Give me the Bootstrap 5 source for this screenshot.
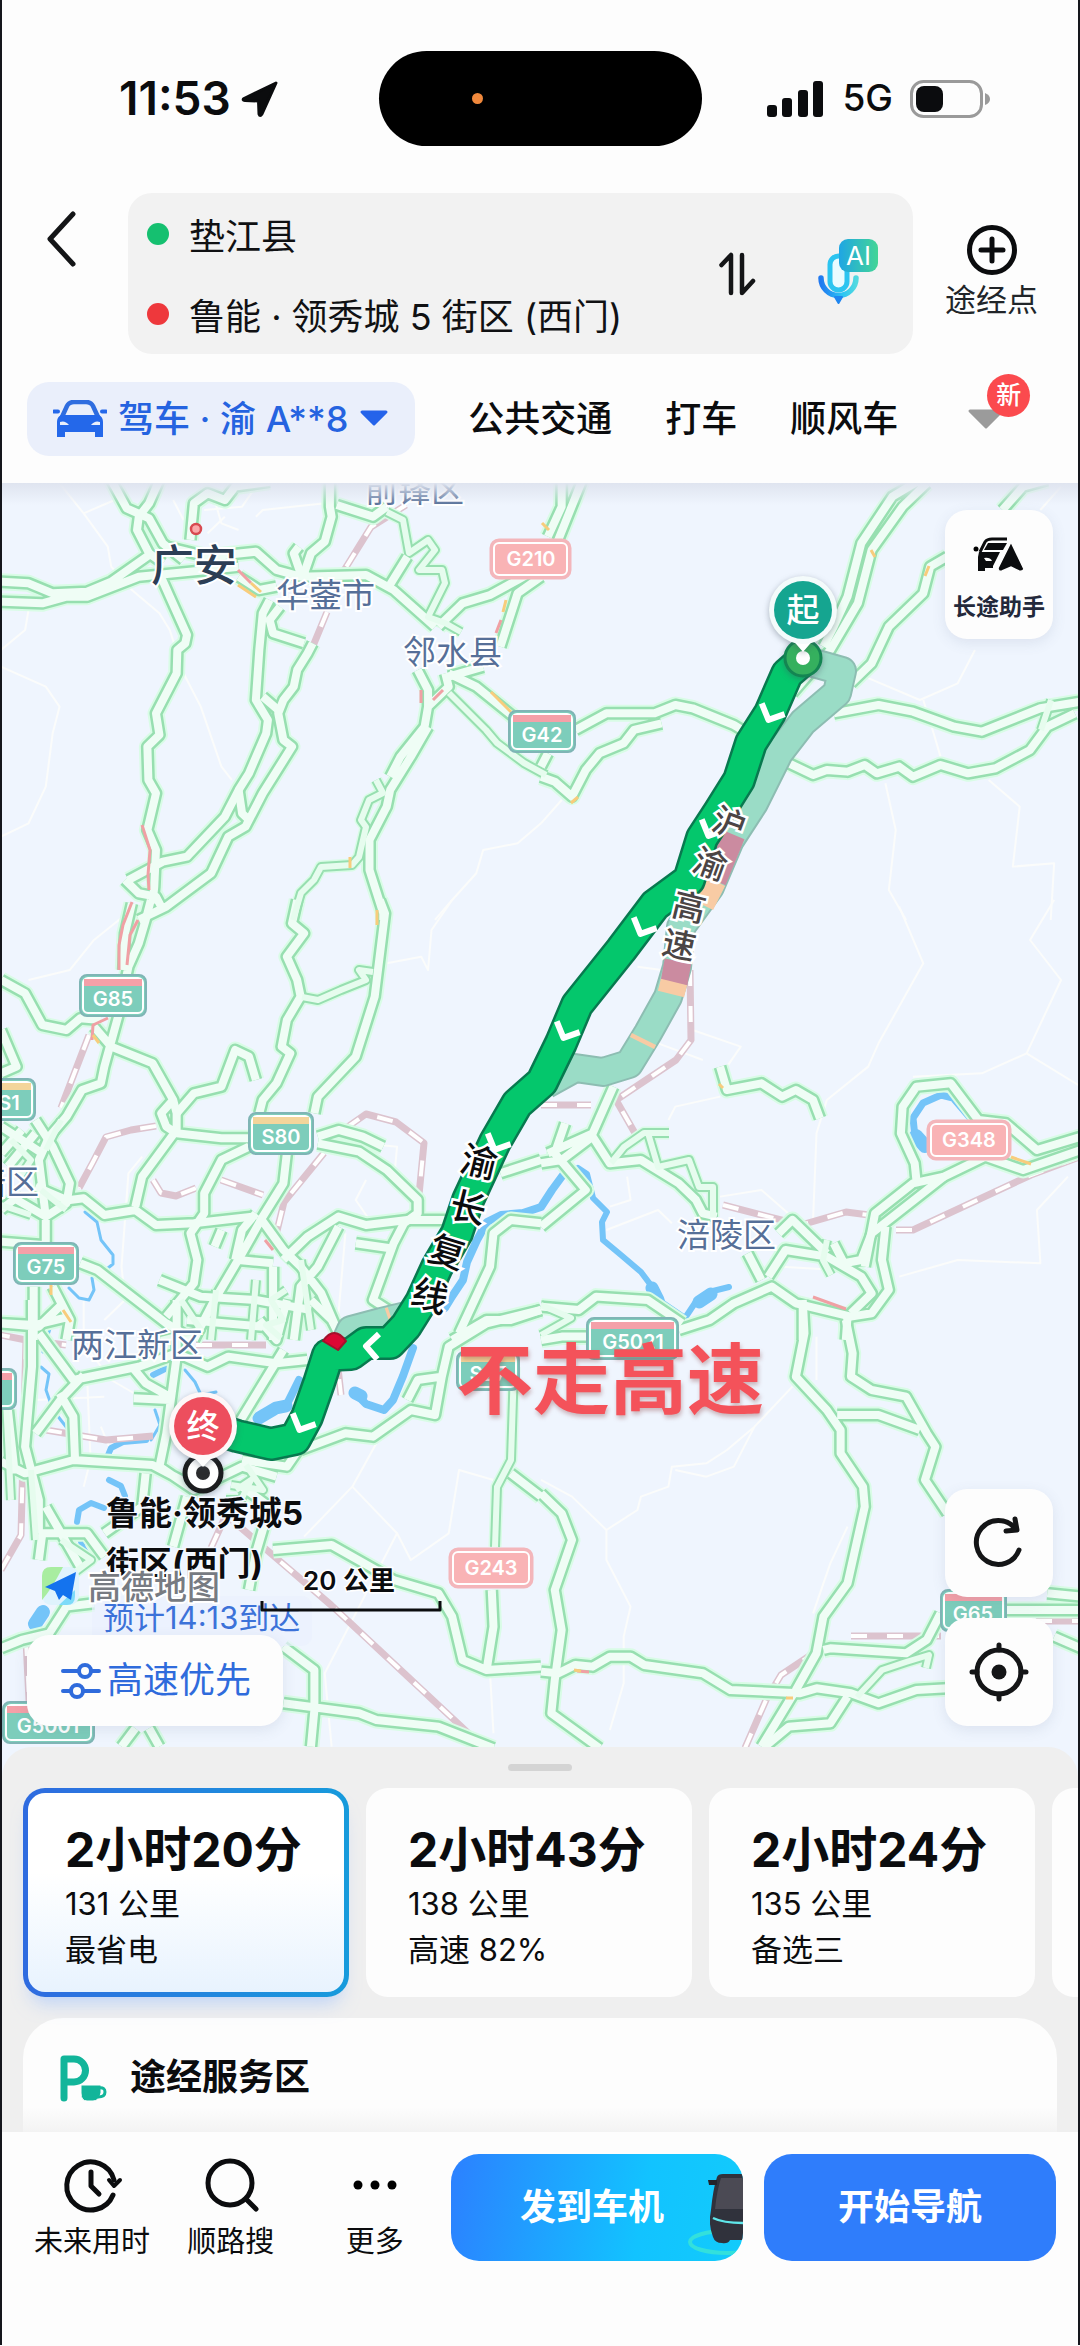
<!DOCTYPE html>
<html lang="zh-CN">
<head>
<meta charset="utf-8">
<meta name="viewport" content="width=device-width, initial-scale=1">
<title>路线规划</title>
<link href="https://cdn.jsdelivr.net/npm/bootstrap@5.3.0/dist/css/bootstrap.min.css" rel="stylesheet">
<style>
body{font-family:Inter,"Noto Sans CJK SC",sans-serif;background:#fdfdfd;color:#0b0c0e;line-height:1.25;overflow-x:hidden}
svg{display:block}
button{color:inherit}
.screen{border-left:2px solid #15161c;border-right:2px solid #15161c;overflow:hidden}
/* status bar */
.status{height:193px;padding:51px 88px 0 117px}
.status-side{height:95px;gap:17px}
.status-left{width:260px;gap:10px}
.clock{font-size:46px;font-weight:600}
.net{font-size:37px;font-weight:500}
.island{width:323px;height:95px;border-radius:48px;background:#000;padding-left:93px}
.island i{width:11px;height:11px;border-radius:50%;background:#f0883c}
/* search */
.search{padding:0 40px 0 44px}
.ends{background:#f2f2f2;border-radius:24px;height:161px;padding:0 32px 0 19px;margin-right:32px}
.pin-dot{width:22px;height:22px;border-radius:50%;flex:none}
.end-field{border:0;background:none;font-size:36px;height:80px;width:100%;padding:0;outline:0;color:#101113}
.swap{margin-right:58px}
.t31{font-size:31px;line-height:40px;white-space:nowrap}
/* tabs */
.modes{height:129px;padding:28px 0 0 25px;gap:53px}
.mode{font-size:36px;line-height:44px;font-weight:500;border:0;background:none;padding:0;height:74px;white-space:nowrap}
.mode-on{background:#eaeffb;color:#2563e0;border-radius:22px;padding:0 26px;gap:11px}
.newtag{width:43px;height:43px;border-radius:50%;background:#fb4a4e;color:#fff;font-size:25px;line-height:43px;left:20px;top:-34px;text-align:center}
/* map */
.map svg.chart{width:100%;height:auto;background:#eff5fe}
.map::before{content:"";position:absolute;left:0;right:0;top:0;height:22px;background:linear-gradient(#dfe4ef,#dfe4ef00)}
.chart path,.chart use{fill:none;stroke-linejoin:round}
#roads path,#rails path,#lanes path,#hot path,#river path{vector-effect:non-scaling-stroke}
#river path{stroke-linecap:round}
.place{font-size:33px;fill:#566f98;stroke:#fff;stroke-width:4px;paint-order:stroke}
.place .city{font-size:43px;fill:#2c3e55;font-weight:500}
.way{font-size:33px;font-weight:500;stroke:#fff;stroke-width:5px;paint-order:stroke;text-anchor:middle}
.way-main{font-size:36px}
.shield{font-size:20px;font-weight:600;fill:#fff;text-anchor:middle}
.dest{font-size:33px;font-weight:700;fill:#0b0c0e;stroke:#f4f9ff;stroke-width:3px;paint-order:stroke}
.lift{filter:drop-shadow(0 2px 3px #40506066)}
.fab{background:#fdfdfd;border:0;border-radius:22px;width:108px;box-shadow:0 4px 14px #5060801f}
.fab-top{right:25px;top:27px;height:129px;font-size:23px;line-height:30px;font-weight:600;color:#23293b}
.fab-stack{right:25px;bottom:51px;gap:21px}
.fab-stack .fab{height:108px}
.prefer{left:25px;bottom:51px;height:91px;width:256px;font-size:36px;color:#2f6bdc}
/* sheet */
.sheet{background:#efefef;border-radius:30px 30px 0 0;margin-top:-30px;height:385px;overflow:hidden}
.grip{width:64px;height:7px;border-radius:4px;background:#d4d4d4;margin:17px auto}
.plans{gap:17px;padding-left:21px}
.plan{flex:0 0 326px;height:209px;border-radius:22px;background:#fdfdfd;border:0;padding:6px 0 0 42px;text-align:left}
.plan b{display:block;font-size:48px;line-height:62px;font-weight:700;white-space:nowrap}
.plan span{display:block;font-size:31px;line-height:46px}
.plan-on{border:5px solid transparent;padding:6px 0 0 37px;background:linear-gradient(#fff 40%,#e8f3fe) padding-box,linear-gradient(90deg,#2f6be0,#179bdc) border-box;box-shadow:0 14px 18px -8px #8db8ff80}
.service{background:linear-gradient(#fdfdfd 75%,#f1f1f1);border-radius:40px 40px 0 0;margin:21px 21px 0;height:119px;padding:0 34px;gap:21px;font-size:36px;font-weight:700}
/* action bar */
.actions{height:213px;padding:22px 22px 0 32px;background:#fdfdfd}
.tool{border:0;background:none;padding:0;font-size:29px;line-height:36px}
.tool svg{height:62px}
.keys{gap:21px}
.go{height:107px;border:0;border-radius:28px;color:#fff;font-size:36px;font-weight:600;width:292px;background:#2f7dfb}
.go-car{background:linear-gradient(100deg,#2c80ff,#12c3ff 65%,#12cbfb);overflow:hidden}
.go-car svg{right:0;top:0}
</style>
</head>
<body>
<div class="screen">
<header>
  <div class="status d-flex">
    <div class="status-side status-left d-flex align-items-center">
      <span class="clock">11:53</span>
      <svg width="38" height="38" viewBox="0 0 38 38" aria-hidden="true"><path d="M35 3 3 18.500Q1 20 4 20.500L17.500 21 18 34Q19 37 21 34Z" fill="#0b0c0e" stroke="#0b0c0e" stroke-width="3" stroke-linejoin="round"/></svg>
    </div>
    <div class="island d-flex align-items-center"><i></i></div>
    <div class="status-side flex-grow-1 d-flex align-items-center justify-content-end">
      <svg width="58" height="36" viewBox="0 0 58 36" aria-hidden="true"><g fill="#0b0c0e"><rect y="24" width="10" height="12" rx="3"/><rect x="15" y="17" width="10" height="19" rx="3"/><rect x="31" y="9" width="10" height="27" rx="3"/><rect x="46" width="10" height="36" rx="3"/></g></svg>
      <span class="net">5G</span>
      <svg width="80" height="38" viewBox="0 0 80 38" aria-hidden="true"><rect x="1.500" y="1.500" width="70" height="35" rx="12" fill="none" stroke="#9a9a9a" stroke-width="3"/><rect x="6" y="6" width="27" height="26" rx="8" fill="#0b0c0e"/><path d="M75 13q5 2 5 6t-5 6z" fill="#9a9a9a"/></svg>
    </div>
  </div>

  <div class="search d-flex align-items-center">
    <button class="btn p-0 border-0 align-self-start mt-3" aria-label="返回"><svg width="34" height="60" viewBox="0 0 34 60"><path d="M27 5 4 30 27 55" fill="none" stroke="#141517" stroke-width="5" stroke-linecap="round" stroke-linejoin="round"/></svg></button>
    <div class="ends d-flex align-items-center flex-grow-1 ms-5">
      <div class="flex-grow-1">
        <label class="d-flex align-items-center gap-3"><span class="pin-dot" style="background:#15c070"></span><input class="end-field ms-1" type="text" aria-label="起点" value="垫江县"></label>
        <label class="d-flex align-items-center gap-3"><span class="pin-dot" style="background:#ee383c"></span><input class="end-field ms-1" type="text" aria-label="终点" value="鲁能 · 领秀城 5 街区 (西门)"></label>
      </div>
      <button class="swap btn p-0 border-0" aria-label="交换"><svg width="38" height="44" viewBox="0 0 38 44"><path d="M2.500 13 12 3V41M23 3V41L34 29" fill="none" stroke="#141517" stroke-width="4.500" stroke-linecap="round" stroke-linejoin="round"/></svg></button>
      <button class="btn p-0 border-0" aria-label="AI 语音"><svg width="66" height="78" viewBox="0 0 66 78">
        <defs><linearGradient id="mic" x1="0" x2="1"><stop stop-color="#2079f0"/><stop offset=".6" stop-color="#2cc4f4"/><stop offset="1" stop-color="#52d9e0"/></linearGradient><linearGradient id="aib" x1="0" x2="1"><stop stop-color="#1fa6e4"/><stop offset="1" stop-color="#43d596"/></linearGradient></defs>
        <rect x="15" y="21" width="17" height="34" rx="8.500" fill="#e9fbff" stroke="#2cc4f0" stroke-width="5"/>
        <path d="M6 43a17.500 17.500 0 0 0 35 0" fill="none" stroke="url(#mic)" stroke-width="5.500" stroke-linecap="round"/><path d="M20 62h7l-3.500 6z" fill="#1f86f0" stroke="#1f86f0" stroke-width="2" stroke-linejoin="round"/>
        <rect x="24" y="4" width="39" height="33" rx="9" fill="url(#aib)"/><text x="43.500" y="30" font-size="26" fill="#fff" text-anchor="middle">AI</text></svg></button>
    </div>
    <button class="btn p-0 border-0 t31 d-flex flex-column align-items-center gap-1 pb-1"><svg width="52" height="52" viewBox="0 0 52 52"><circle cx="26" cy="26" r="22.500" fill="none" stroke="#0b0c0e" stroke-width="5"/><path d="M26 15V37M15 26H37" stroke="#0b0c0e" stroke-width="5" stroke-linecap="round"/></svg>途经点</button>
  </div>

  <nav class="modes d-flex align-items-start">
    <button class="mode mode-on d-flex align-items-center">
      <svg width="54" height="38" viewBox="0 0 54 38"><path d="M9 17 14 6Q16 2 21 2H33Q38 2 40 6L45 17" fill="none" stroke="#2f6ddf" stroke-width="4.500"/><path d="M8 15H46Q50 17 50 22V37H42V32H12V37H4V22Q4 17 8 15Z" fill="#2468ea"/><path d="M1 11.500H5M49 11.500H53" stroke="#2468ea" stroke-width="4" stroke-linecap="round"/><path d="M7 22q5-2 9 3H7zM47 22q-5-2-9 3h9z" fill="#eaeffb"/></svg>
      驾车 · 渝 A**8
      <svg width="30" height="18" viewBox="0 0 30 18"><path d="M3 2H27L15 14Z" fill="#2563ea" stroke="#2563ea" stroke-width="3" stroke-linejoin="round"/></svg>
    </button>
    <button class="mode">公共交通</button><button class="mode">打车</button><button class="mode">顺风车</button>
    <button class="mode d-flex align-items-center ms-3" aria-label="更多方式"><span class="position-relative"><svg width="38" height="22" viewBox="0 0 38 22"><path d="M3 3H35L19 19Z" fill="#9b9b9b" stroke="#9b9b9b" stroke-width="3" stroke-linejoin="round"/></svg><span class="newtag position-absolute">新</span></span></button>
  </nav>
</header>

<main class="map position-relative">
<svg class="chart" viewBox="1 483 1076 1294" role="img" aria-label="路线地图">
<defs>
<g id="lanes">
 <g transform="translate(0 480) scale(.3444 .3333)"><path d="M170 10 240 100 310 200 320 260 380 330 460 400 490 450 530 580 580 680 640 860 670 900M240 100 330 60M740 110 760 90 940 70M500 60 530 120M620 60 640 130 690 150M590 90 700 80 740 20M600 160 650 110M80 390 70 450 0 510M0 560 130 620 170 680 150 760 130 920 80 1030 0 1070M1568 1030 1500 1090 1400 1110 1380 1180 1310 1260 1260 1320"/></g>
 <g transform="translate(540 480) scale(.3444 .3333)"><path d="M0 1030 60 960M940 590 1100 660 1210 610 1260 510M1110 660 1140 760 1160 830M1000 910 1030 1050 1010 1230 1060 1320M1300 900 1390 980 1370 1160 1490 1150 1480 1320M1510 20 1450 90"/></g>
 <g transform="translate(0 900) scale(.3444 .3333)"><path d="M390 20 270 120 200 210 80 240M1120 190 1220 170 1240 210 1250 90 1310 0M410 770 370 820 350 1100 360 1200 300 1260M1050 730 1150 740 1140 850M1060 840 1030 900 1070 960M1000 1000 980 1240"/></g>
 <g transform="translate(540 900) scale(.3444 .3333)"><path d="M1040 20 1110 190 980 430 950 500 830 600 800 700 790 960M440 390 580 440 540 500M370 660 390 620 520 590M280 200 350 210M340 430 470 480M1490 0 1420 120 1510 240 1410 460 1280 520 1080 530M1410 460 1568 560M520 890 640 870 740 960M1530 830 1440 930 1450 1090 1210 1080 1040 1130M190 990 340 930 380 970M250 830 260 900 200 920M700 1100 860 1110"/></g>
 <g transform="translate(0 1300) scale(.3444 .3333)"><path d="M240 0 240 130 320 240 420 300M250 230 260 480 240 560M1090 430 1020 560 1150 700 1190 780 1300 700 1330 510 1430 540M1020 560 880 710M1150 700 1010 980 940 1120 960 1340M1420 1120 1430 1300M100 300 300 290M290 380 330 480"/></g>
 <g transform="translate(540 1300) scale(.3444 .3333)"><path d="M730 260 620 380 540 450 480 490 380 500 370 560 290 590 280 630 190 690 90 590 0 540M620 380 560 500 480 530 390 510M190 690 190 780 260 920 240 1010 240 1150 200 1290M890 680 840 790 790 940M800 240 800 110"/></g>
</g>
<g id="river">
 <path stroke-width="8" d="M562 1175 551 1190 540 1207 522 1213 500 1215 486 1222 476 1240 466 1262 462 1280 452 1295 444 1308M412 1348 402 1376 392 1400 383 1410 365 1404 354 1393"/>
 <path stroke-width="6" d="M577 1168 586 1174 592 1198 606 1212 601 1222 602 1240 620 1255 640 1272 652 1288 662 1303 684 1318 694 1303 708 1292 728 1287"/>
 <path stroke-width="13" d="M651 1288 657 1300M698 1302 710 1294M354 1393 360 1396M258 1418 275 1408 285 1406"/>
 <path stroke-width="8" d="M285 1406 298 1380"/>
 <path stroke-width="7" d="M927 1149 914 1137 912 1118 922 1103 940 1095 952 1098 970 1119"/>
 <path stroke-width="14" d="M915 1136 924 1146"/>
 <path stroke-width="3" d="M84 1212 96 1222 100 1240 112 1255 112 1264 107 1268M68 1288 78 1298 88 1300 93 1290 91 1278M184 1370 194 1382 200 1395 215 1392M40 1367 48 1374 45 1390 52 1410 66 1428M150 1440 159 1425 154 1410M50 1325 42 1352"/>
 <path stroke-width="6" d="M105 1460 110 1448 122 1442 145 1440M108 1480 120 1486 124 1496 118 1504M76 1522 78 1510 90 1503 103 1508M90 1560 82 1548 78 1535M168 1367 152 1375"/>
 <path stroke-width="14" d="M34 1624 42 1612"/>
</g>
<g id="rails">
 <path d="M405 505 370 527 342 572M326 612 312 646M88 1035 60 1108M155 1126 130 1130 105 1137 92 1162 78 1188M345 1128 365 1114 395 1122 423 1143 418 1195M152 1180 160 1193 175 1196 195 1188M220 1180 262 1195M323 1153 283 1202 275 1235M540 1105 590 1105M689 970 690 1040 675 1060 615 1100 635 1135M722 1205 800 1225 845 1212 868 1215M895 1230 912 1230 1030 1175 1076 1158M0 1570 20 1535 25 1340 0 1335M25 1340 65 1345M45 1430 105 1440 152 1436M210 1548 225 1515 330 1605 480 1745M25 1640 30 1740M744 1748 765 1700 780 1675 810 1655M850 1636 940 1636M1035 1621 1078 1621M340 1395 335 1350M195 1345 265 1345"/>
</g>
<g id="roads">
 <g transform="translate(0 480) scale(.3444 .3333)">
  <path d="M320 0 365 85 430 115 470 190 530 240M460 0 430 70 400 110 395 150 430 220 470 250M0 305 80 310 150 340 250 335 320 305 430 225M0 365 120 370 190 350 250 350 400 290 600 270 690 260M460 280 490 350 540 465 535 490 512 510 510 580 450 700 460 765 425 800 428 900 450 940 425 1050 450 1110 445 1220 440 1270"/>
  <path d="M480 200 600 230 740 215 800 270 870 290 1060 285 1140 330 1260 440M955 0V80L960 110 940 185 900 220 880 280M975 75 1080 110 1120 80M690 290 750 330 800 320M780 360 760 400 750 510 740 660 775 720 770 760 720 880 690 930 650 1010 540 1130 470 1145 370 1200M810 380 780 420 790 460 880 490"/>
  <path d="M905 490 890 520 860 570 850 620 820 660 805 700 820 780 845 800 760 940 710 1040 660 1070 610 1180 480 1280 400 1320M690 930 700 1000 720 1020M360 1200 400 1240 450 1250 470 1290M550 180 560 70 600 40 650 60 680 20 780 5M1120 330 1180 230M1270 440 1340 370 1420 345 1500 300 1568 260M1450 500 1500 340 1568 290M1300 590 1400 560"/>
  <path d="M1210 570 1240 630 1240 680 1230 740 1160 830 1130 890M1240 680 1300 620 1290 580M1300 580 1380 620 1500 720M1240 740 1190 830 1130 930 1120 980 1070 1080 1070 1170 1110 1300V1320M760 650 805 690M865 200 850 220 870 280"/>
 </g>
 <g transform="translate(540 480) scale(.3444 .3333)">
  <path d="M60 0 60 80 20 170M120 0 50 180M1100 0 1020 50 930 190 890 350 850 440 820 500M1120 10 1050 80 960 210 920 370 840 510 730 640M1470 0 1400 20 1340 90M1180 230 1130 260 1110 340 1010 440 960 550 900 610"/>
  <path d="M100 750 190 700 330 700 390 675 440 685 560 735 600 760M850 700 980 675 1080 695 1200 740 1280 755 1450 685 1568 665M0 890 40 905 90 950 130 870 170 820 240 790 270 750 350 730M0 860 20 820"/>
  <path d="M720 850 790 885 830 870 890 875 940 855 975 880 1040 860 1080 890 1160 855 1240 880 1320 865 1420 810 1470 740 1550 700"/>
 </g>
 <g transform="translate(0 900) scale(.3444 .3333)">
  <path d="M0 240 70 280 120 375 190 390 230 355 290 360M435 0 420 60 400 130 370 200 340 350 300 500 290 550 235 570 190 650 140 710 110 780 130 950M380 10 360 100 355 210M270 380 320 440 440 490 500 600 510 640 510 690 410 830 390 920M500 600 465 640 480 680 510 700 640 715 720 715"/>
  <path d="M860 0 845 70 880 100 830 170 860 240 870 290 830 360 815 440 840 460 800 550 760 600 750 640M1100 0 1115 40 1085 290 1030 470 920 590 910 640M510 640 560 580 640 560 680 450 720 470 740 540M920 710 980 690 1050 710 1110 740M920 730 1040 755 1120 810 1210 900 1210 940 1170 970 1140 1030 1080 1200 1140 1240"/>
  <path d="M200 900 240 895 300 945 390 930 450 975 560 970 730 950M0 1025 120 1035M130 960V1050M30 890 130 950 190 910 200 850 150 740 100 660M0 390 45 500 0 520M0 680 60 720 120 760M0 760 60 690M20 800 100 700M100 860 190 900M0 930 60 880"/>
  <path d="M720 740 640 780 590 880 590 940 550 1000 570 1080 560 1150 480 1250M830 760 820 850 760 950 700 1060 620 1200 560 1320M750 950 820 1050 870 1100 930 1180 980 1300M820 1080 890 1010 980 950 1060 975 1180 960 1290 960M980 980 920 1100 870 1160 850 1320M1030 1030 1130 1045M740 940 700 990 680 1080M640 990 620 1040"/>
  <path d="M230 1090 280 1110 480 1270 560 1320M95 1160V1320M150 1160 200 1260 190 1320M0 1270 100 1275 200 1250M460 1140 580 1190 740 1200 900 1230M790 1100V1320M690 1080 790 1090M1330 1300 1420 1100 1430 1000 1480 960 1568 970M1310 1320 1410 1260 1480 1260 1568 1230M1450 820 1568 780"/>
 </g>
 <g transform="translate(540 900) scale(.3444 .3333)">
  <path d="M210 560 150 700 20 760M70 670 40 760 130 870 0 980M0 790 60 780 150 710 200 790 290 780 400 850 450 900 470 940 510 950M520 500 540 570 640 550 700 590 740 570 790 600 810 655"/>
  <path d="M1090 840 1085 790 1045 700 1050 620 1090 560 1190 550 1270 660 1350 670 1440 750 1568 710M940 1100 970 940 1080 850 1170 830 1290 770 1400 810 1568 750M1000 980 990 1080 1010 1170 960 1240 900 1250 740 1210 670 1160 560 1210 490 1260 400 1290"/>
  <path d="M600 1060 640 1140M660 1130 710 1050 830 1070 930 1130 960 1180 900 1240M690 1000 730 960 830 1060M850 1030 880 1090 930 1080 960 1000 1170 830M0 1220 110 1230 160 1190 310 1200 410 1270M760 1210V1320M890 1250 885 1320M0 1320 60 1310 140 1310"/>
 </g>
 <g transform="translate(0 1300) scale(.3444 .3333)">
  <path d="M90 0V200L70 440 110 600V700M20 330 40 520M0 485 70 520 210 480 440 495 560 560M510 0V170L480 400 460 500 560 570 700 500 800 530M0 70 110 80 180 10M110 100 210 240 400 200 510 160 600 200 660 170 800 190 890 180M170 280 210 350 215 480M385 295 490 300M100 400 180 290 240 225M380 200 420 250 490 290"/>
  <path d="M820 150 690 370M750 60 800 120 830 0M540 60 760 80M870 450 1000 400 1080 410 1190 330 1260 345 1280 230 1210 240 1180 300M1280 230 1300 140 1410 70 1568 30M1480 520 1568 590M700 480 830 500 870 440M540 590 500 740M420 520 410 620 300 700M700 560 780 620 740 760 720 870M900 0 960 60 980 100"/>
  <path d="M790 750 960 735 1140 840 1270 880 1310 950 1340 1080 1410 1110 1568 1100M1425 870 1430 980 1410 1110M820 1040 910 1110V1230L900 1340M820 1210 1040 1240 1090 1260 1270 1280 1430 1345M0 1045 60 1020 140 1000 190 920 270 910M110 700 250 700 300 770M130 620 230 800M350 1340 390 1285M460 1340 430 1285M110 780 120 700"/>
 </g>
 <g transform="translate(540 1300) scale(.3444 .3333)">
  <path d="M760 0 765 100 740 230 830 330 870 390 870 460 935 560 940 620 890 850 820 950 800 1060 740 1170 640 1340M885 60 905 160 900 230 960 270 1060 290 1120 400 1145 440 1115 540 1180 640M860 345 980 345 1100 390M0 580 60 640 90 720 40 870 60 990 40 1140 30 1240 170 1345"/>
  <path d="M0 1115 50 1120 100 1095 150 1100 200 1070 260 1070 300 1095 470 1120 550 1170 750 1180 800 1165 900 1180 980 1210 1090 1170 1180 1165M820 1050 840 1045 1060 1060 1120 1020 1160 940M890 1190 840 1270 720 1280 650 1340M1350 930H1568M1470 880 1568 890M1490 1010 1568 1045"/>
 </g>
</g>
<!-- minor winding roads, drawn narrower -->
<g id="byways">
 <path d="M386 512 402 520 408 553 427 540 434 550 418 570 441 570 444 583 434 603 427 617 444 623 460 632M448 693 465 710 485 730 496 743 523 763 545 775M375 780 382 793 368 800 360 820 365 827 358 857 351 865 320 867 313 880 300 893 292 920"/>
 <path d="M301 997 317 1000 340 990 365 980 358 970 372 972M610 1163 623 1147 643 1133 668 1133M647 1133 657 1167 688 1160 698 1187 712 1187 712 1217M280 1338 265 1325 282 1320 270 1300 285 1290"/>
 <path d="M513 1367 510 1460 496 1487 494 1547M540 1305 570 1318 540 1335M856 1697 881 1670 905 1662 928 1655 925 1668M826 1240 822 1260 830 1275M1050 700 1040 730M235 1490 250 1480 240 1500 225 1500M245 1465 262 1490 230 1485"/>
 <path d="M10 1140 30 1160 20 1175M40 1190 65 1210M60 1120 45 1150M0 1205 30 1215M180 1300 200 1330 160 1340M215 1290 210 1340M255 1280 250 1340M300 1260 310 1330M30 1470 35 1540M5 1400 10 1500M60 1540 90 1560 70 1575"/>
</g>
<g id="hot">
 <path stroke="#f0a0a4" d="M141 825 149 850 147 875 148 890M131 902 122 925 118 945 118 970M137 920 129 935 126 965M420 690V703M432 700 442 690M237 570 250 583M500 620 495 633M107 1018 92 1025 91 1040M812 1297 845 1309M264 1240 272 1250M576 1671 588 1672"/>
 <path stroke="#f8cc7c" d="M490 692 510 712M92 1035 98 1043M250 583 260 592M237 585 255 597M505 600 502 612M349 857V868M376 910V925M541 523 548 530M870 550 874 557M928 566 924 576M573 1670 580 1671M62 1310 70 1322M785 1698 792 1698M570 803 577 797M1010 1157 1030 1164M718 1084 722 1088M50 1295 50 1285"/>
</g>
<path id="main" d="M802 660 786 674 769 713 750 743 738 780 718 812 701 838 688 880 654 905 620 950 576 1005 560 1043 541 1082 516 1104 494 1142 467 1200 456 1233 436 1267 420 1302 405 1326 389 1343 365 1343 350 1354 327 1355 318 1383 306 1417 294 1439 270 1444 236 1436 202 1425"/>
<path id="alt" d="M802 660 841 671 836 693 802 722 778 753 753 803 729 840 709 887 680 927 676 967 667 997 647 1033 628 1064 602 1072 574 1068 545 1084M340 1352 350 1330 380 1322 405 1316"/>
<path id="chev" d="M-11-12 0 2 14-8"/>
</defs>
<use href="#lanes" stroke="#fbfcfb" stroke-width="2"/>
<use href="#river" stroke="#74c4f8"/>
<use href="#rails" stroke="#dcc3ce" stroke-width="7"/>
<use href="#rails" stroke="#fff" stroke-width="4" stroke-dasharray="16 20"/>
<use href="#roads" stroke="#d9fce6" stroke-width="17"/>
<use href="#byways" stroke="#d9fce6" stroke-width="13"/>
<use href="#roads" stroke="#97dfb0" stroke-width="13"/>
<use href="#byways" stroke="#97dfb0" stroke-width="10"/>
<use href="#roads" stroke="#effdf5" stroke-width="8"/>
<use href="#byways" stroke="#e6fcee" stroke-width="6"/>
<use href="#hot" stroke-width="3"/>

<use href="#alt" stroke="#8dbdb2" stroke-width="30"/>
<use href="#alt" stroke="#9adcc6" stroke-width="26"/>
<path stroke="#cb8ba0" stroke-width="27" d="M731 834 712 880M677 961 673 983"/>
<path stroke="#f8cba4" stroke-width="27" d="M712 880 700 904M673 982 670 994M643 1039 641 1043M388 1321 391 1320"/>
<use href="#main" stroke="#08794f" stroke-width="34"/>
<use href="#main" stroke="#04c76c" stroke-width="29"/>
<path d="M322 1341Q333 1325 345 1341L337 1350Z" style="fill:#dc0834" stroke="#a3122c" stroke-width="2"/>
<g stroke="#fff" stroke-width="6"><use href="#chev" transform="translate(768 718) rotate(16)"/><use href="#chev" transform="translate(708 834) rotate(16)"/><use href="#chev" transform="translate(640 932) rotate(16)"/><use href="#chev" transform="translate(563 1036) rotate(16)"/><use href="#chev" transform="translate(494 1148) rotate(16)"/><use href="#chev" transform="translate(367 1346) rotate(85)"/><use href="#chev" transform="translate(299 1428) rotate(16)"/></g>

<g class="place"><text x="364" y="502">前锋区</text><text x="275" y="607">华蓥市</text><text x="402" y="664">邻水县</text><text x="676" y="1247">涪陵区</text><text x="70" y="1357">两江新区</text><text x="-61" y="1194">北碚区</text>
<text class="city" x="150" y="581">广安</text></g>
<circle cx="195" cy="529" r="5" fill="#fba9aa" stroke="#d84a50" stroke-width="2.500"/>

<g class="shield">
 <g fill="#f9b3b5" stroke="#fff" stroke-width="2"><rect x="490" y="540" width="79" height="38" rx="8" stroke="#f3b6bb" stroke-width="3"/><rect x="493" y="543" width="73" height="32" rx="5"/><rect x="927" y="1121" width="82" height="38" rx="8" stroke="#f3b6bb" stroke-width="3"/><rect x="930" y="1124" width="76" height="32" rx="5"/><rect x="449" y="1549" width="82" height="38" rx="8" stroke="#f3b6bb" stroke-width="3"/><rect x="452" y="1552" width="76" height="32" rx="5"/></g>
 <g fill="#7dcdbb" stroke="#7fb5b5" stroke-width="2"><rect x="508" y="711" width="66" height="41" rx="7"/><rect x="79" y="975" width="66" height="41" rx="7"/><rect x="13" y="1243" width="64" height="41" rx="7"/><rect x="-32" y="1079" width="66" height="41" rx="7"/><rect x="248" y="1113" width="64" height="41" rx="7"/><rect x="586" y="1318" width="91" height="41" rx="7"/><rect x="456" y="1352" width="62" height="38" rx="7"/><rect x="940" y="1590" width="65" height="41" rx="7"/><rect x="2" y="1702" width="91" height="41" rx="7"/><rect x="-50" y="1369" width="65" height="40" rx="7"/></g>
 <g fill="none" stroke="#fff" stroke-width="2"><rect x="511" y="714" width="60" height="35" rx="5"/><rect x="82" y="978" width="60" height="35" rx="5"/><rect x="16" y="1246" width="58" height="35" rx="5"/><rect x="-29" y="1082" width="60" height="35" rx="5"/><rect x="251" y="1116" width="58" height="35" rx="5"/><rect x="589" y="1321" width="85" height="35" rx="5"/><rect x="459" y="1355" width="56" height="32" rx="5"/><rect x="943" y="1593" width="59" height="35" rx="5"/><rect x="5" y="1705" width="85" height="35" rx="5"/><rect x="-47" y="1372" width="59" height="34" rx="5"/></g>
 <g fill="#f4a0a8"><rect x="512" y="715" width="58" height="7"/><rect x="83" y="979" width="58" height="7"/><rect x="17" y="1247" width="56" height="7"/><rect x="590" y="1322" width="83" height="7"/><rect x="944" y="1594" width="57" height="7"/><rect x="6" y="1706" width="83" height="7"/><rect x="-46" y="1373" width="57" height="7"/></g>
 <g fill="#f3d59b"><rect x="-28" y="1083" width="58" height="7"/><rect x="252" y="1117" width="56" height="7"/><rect x="460" y="1356" width="54" height="6"/></g>
 <text x="530" y="566">G210</text><text x="968" y="1147">G348</text><text x="490" y="1575">G243</text><text x="541" y="742">G42</text><text x="112" y="1006">G85</text><text x="45" y="1274">G75</text><text x="8" y="1110">S1</text><text x="280" y="1144">S80</text><text x="632" y="1349">G5021</text><text x="487" y="1381">S27</text><text x="972" y="1621">G65</text><text x="47" y="1733">G5001</text>
</g>

<g class="way" fill="#4b4545"><text transform="translate(728 824) rotate(20)" y="11">沪</text><text transform="translate(709 865) rotate(20)" y="11">渝</text><text transform="translate(688 908) rotate(14)" y="11">高</text><text transform="translate(678 946) rotate(12)" y="11">速</text></g>
<g class="way way-main" fill="#0b0c0e"><text transform="translate(478 1162) rotate(14)" y="13">渝</text><text transform="translate(467 1208) rotate(14)" y="13">长</text><text transform="translate(446 1252) rotate(17)" y="13">复</text><text transform="translate(429 1296) rotate(17)" y="13">线</text></g>

<g class="lift"><circle cx="802" cy="658" r="18" fill="#35b05e" stroke="#148552" stroke-width="3"/><circle cx="802" cy="658" r="7" fill="#fff"/><circle cx="202" cy="1473" r="18" fill="#fff" stroke="#1b1c1e" stroke-width="5"/><circle cx="202" cy="1473" r="7" fill="#2b2c2e"/></g>
<g class="lift"><path d="M790 638 802 652 814 638Z M190 1454 202 1467 214 1454Z" style="fill:#fff"/><circle cx="802" cy="610" r="34" fill="#f4fbfb"/><circle cx="202" cy="1426" r="34" fill="#fdf7f8"/></g>
<circle cx="802" cy="610" r="29" fill="#15a590"/><circle cx="202" cy="1426" r="29" fill="#ed4e5e"/>
<g fill="#fff" font-size="33" font-weight="500" text-anchor="middle"><text x="802" y="622">起</text><text x="202" y="1438">终</text></g>

<text x="455" y="1408" font-size="77" font-weight="700" fill="#f4525a" style="filter:drop-shadow(1px 3px 2px #80303055)">不走高速</text>
<g class="dest"><text x="105" y="1525">鲁能·领秀城5</text><text x="105" y="1575">街区(西门)</text></g>
<rect x="91" y="1596" width="220" height="50" rx="10" fill="#eaf1fdb0"/>
<text x="102" y="1629" font-size="31" fill="#3c72d9">预计14:13到达</text>
<g><rect x="41" y="1567" width="37" height="38" rx="9" fill="#dff3fd"/><path d="M41 1600V1576Q41 1567 50 1567H62Q50 1590 41 1600Z" style="fill:#a8eda0"/><path d="M58 1605 74 1590V1596Q74 1605 66 1605Z" style="fill:#7edbf9"/><path d="M75 1572 44 1587 54 1591 58 1600 62 1595 70 1600Z" style="fill:#1473ee"/></g>
<text x="87" y="1599" font-size="33" fill="#777b82" stroke="#fff" stroke-width="4" paint-order="stroke" font-weight="500">高德地图</text>
<text x="302" y="1590" font-size="26" font-weight="600" fill="#0b0c0e" stroke="#fff" stroke-width="3" paint-order="stroke">20 公里</text>
<path d="M261 1601V1610H439V1601" stroke="#0b0c0e" stroke-width="3"/>
</svg>

<button class="fab fab-top position-absolute p-0 pt-2 d-flex flex-column align-items-center justify-content-center gap-3" type="button">
<svg width="52" height="40" viewBox="0 6 52 40"><path d="M7 22 12 12Q14 9 19 9H34" fill="none" stroke="#0b0c0e" stroke-width="3"/><path d="M15 13H34L30 20H11Z" fill="#0b0c0e"/><path d="M6 22H27L20 36V38H12V41H5V27Z" fill="#0b0c0e"/><path d="M11 28Q17 27 19 31H13Z" fill="#fdfdfd"/><circle cx="3" cy="19" r="2.500"/><path d="M38 12 51 39Q50 42 46 41L38 37 29 41Q25 42 25 38Z" fill="#0b0c0e" stroke="#fdfdfd" stroke-width="1.500"/></svg>
<span>长途助手</span></button>
<div class="fab-stack position-absolute d-flex flex-column">
<button class="fab p-0 d-flex align-items-center justify-content-center" aria-label="刷新"><svg width="60" height="60" viewBox="0 0 60 60" fill="none" stroke="#141517" stroke-width="5" stroke-linecap="round" stroke-linejoin="round"><path d="M50 37A22 22 0 1 1 46 15"/><path d="M46 6 48 17 37 18"/></svg></button>
<button class="fab p-0 d-flex align-items-center justify-content-center" aria-label="定位"><svg width="60" height="60" viewBox="0 0 60 60" fill="none" stroke="#141517" stroke-width="5" stroke-linecap="round"><circle cx="30" cy="30" r="22"/><circle cx="30" cy="30" r="7.500" fill="#141517" stroke="none"/><path d="M30 3V8M30 52V57M3 30H8M52 30H57"/></svg></button>
</div>
<button class="fab prefer position-absolute p-0 d-flex align-items-center justify-content-center gap-1"><svg width="44" height="40" viewBox="0 0 44 40" fill="none" stroke="#2f6bdc" stroke-width="4" stroke-linecap="round"><path d="M4 10H20M32 10H40M4 30H12M24 30H40"/><circle cx="26" cy="10" r="6"/><circle cx="18" cy="30" r="6"/></svg>高速优先</button>
</main>

<section class="sheet position-relative">
  <div class="grip"></div>
  <div class="plans d-flex">
    <button class="plan plan-on"><b>2小时20分</b><span>131 公里</span><span>最省电</span></button>
    <button class="plan"><b>2小时43分</b><span>138 公里</span><span>高速 82%</span></button>
    <button class="plan"><b>2小时24分</b><span>135 公里</span><span>备选三</span></button>
    <button class="plan" aria-label="更多方案"></button>
  </div>
  <div class="service d-flex align-items-center">
    <svg width="52" height="50" viewBox="0 0 52 50"><path d="M7 45V6H17A11.500 11.500 0 0 1 17 29H7" fill="none" stroke="#12b59a" stroke-width="7" stroke-linecap="round" stroke-linejoin="round"/><path d="M24 32H44V40Q42 48 36 48H30Q24 48 24 40Z" fill="#12b59a" stroke="#fdfdfd"/><path d="M42 35Q48 34 48 39T41 44" fill="none" stroke="#12b59a" stroke-width="3"/></svg>
    途经服务区
  </div>
</section>

<footer class="actions d-flex align-items-start justify-content-between">
  <button class="tool d-flex flex-column align-items-center gap-2"><svg width="62" viewBox="0 0 62 62" fill="none" stroke="#0b0c0e" stroke-width="5" stroke-linecap="round" stroke-linejoin="round"><path d="M52 41A24 24 0 1 1 53 26M30 18V32L38 40"/><path d="M48 26 53 32 59 26" stroke-width="4"/></svg>未来用时</button>
  <button class="tool d-flex flex-column align-items-center gap-2"><svg width="62" viewBox="0 0 62 62" fill="none" stroke="#0b0c0e" stroke-width="5" stroke-linecap="round"><circle cx="30" cy="29" r="22"/><path d="M46 45 56 55"/></svg>顺路搜</button>
  <button class="tool d-flex flex-column align-items-center gap-2 ms-4 ps-2"><svg width="62" viewBox="0 0 62 62"><circle cx="14" cy="31" r="4.500"/><circle cx="31" cy="31" r="4.500"/><circle cx="48" cy="31" r="4.500"/></svg>更多</button>
  <div class="keys d-flex ms-2">
    <button class="go go-car position-relative pe-3"><svg class="position-absolute" width="58" height="107" viewBox="0 0 58 107"><ellipse cx="42" cy="88" rx="37" ry="11" fill="none" stroke="#33e0dc" stroke-width="4"/><path d="M32 23Q33 20 38 20H58V86H45Q43 90 37 89 30 89 28 83 23 70 26 56Q28 35 32 23Z" fill="#30323c"/><path d="M36 24H58V55H30Q32 36 36 24Z" fill="#4b4a54"/><path d="M23 26H32V31H24Z" fill="#23242b"/><path d="M28 64Q38 69 58 69" fill="none" stroke="#5fe6ea" stroke-width="2.500"/></svg>发到车机</button>
    <button class="go">开始导航</button>
  </div>
</footer>
</div>
<script src="https://cdn.jsdelivr.net/npm/bootstrap@5.3.0/dist/js/bootstrap.bundle.min.js"></script>
</body>
</html>
